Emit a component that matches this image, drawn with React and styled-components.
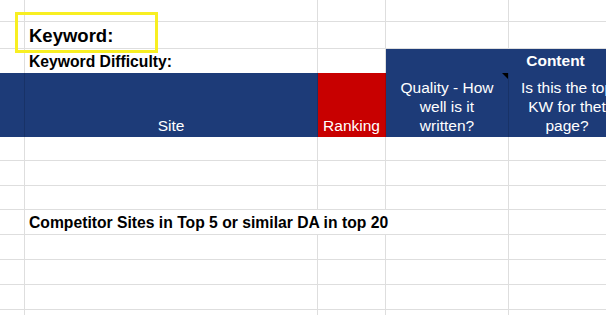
import React from "react";
import styled, { createGlobalStyle } from "styled-components";

const NAVY = "#1d3b78";
const RED = "#c80000";
const LINE = "#dedede";

const GlobalStyle = createGlobalStyle`
  html, body {
    margin: 0;
    padding: 0;
    background: #fff;
    overflow: hidden;
  }
  body {
    font-family: "Liberation Sans", Arial, sans-serif;
  }
`;

const Page = styled.div`
  position: relative;
  width: 606px;
  height: 315px;
  overflow: hidden;
`;

const Grid = styled.div`
  display: grid;
  grid-template-columns: 25px 293px 68px 123px 117px 100px;
  grid-template-rows: 22px 27px 24px 64px 24px 25px 24px 25px 25px 25px 25px 25px;
  width: 726px;
`;

/* plain sheet cell, text sits at the bottom like in Sheets */
const Cell = styled.div`
  box-sizing: border-box;
  display: flex;
  align-items: flex-end;
  min-width: 0;
  padding: 0 4px 1px;
  border-right: 1px solid ${LINE};
  border-bottom: ${({ $flush }) => ($flush ? "none" : `1px solid ${LINE}`)};
  grid-column: ${({ $span }) => ($span ? `span ${$span}` : "auto")};
  color: #000;
  font-size: 15.7px;
  line-height: 18.6px;
  white-space: nowrap;
  ${({ $bold }) => $bold && "font-weight: 700;"}
`;

const KeywordCell = styled(Cell)`
  font-size: 18.5px;
  line-height: 22px;
  font-weight: 700;
  padding-bottom: 1px;
`;

const HeadCell = styled.div`
  position: relative;
  box-sizing: border-box;
  display: flex;
  align-items: flex-end;
  justify-content: center;
  padding: 0 6px 2px;
  background: ${({ $bg }) => $bg || NAVY};
  border-right: 1px solid rgba(0, 0, 0, 0.14);
  color: #fff;
  font-size: 15.5px;
  line-height: 19px;
  text-align: center;
  overflow: hidden;
`;

const GroupHead = styled(HeadCell)`
  grid-column: span 3;
  font-weight: 700;
  line-height: 18.6px;
  padding-bottom: 2px;
`;

const NoteMark = styled.span`
  position: absolute;
  top: 0;
  right: 0;
  width: 0;
  height: 0;
  border-top: 6px solid #000;
  border-left: 6px solid transparent;
`;

const Highlight = styled.div`
  position: absolute;
  left: 15px;
  top: 12px;
  width: 143px;
  height: 41px;
  box-sizing: border-box;
  border: 3.5px solid #f8ef22;
  pointer-events: none;
`;

const COLS = 6;

function BlankRow({ id }) {
  return Array.from({ length: COLS }, (_, i) => <Cell key={`${id}-${i}`} />);
}

export default function App() {
  return (
    <Page>
      <GlobalStyle />
      <Grid>
        <BlankRow id="r1" />

        <Cell />
        <KeywordCell>Keyword:</KeywordCell>
        <Cell />
        <Cell />
        <Cell />
        <Cell />

        <Cell $flush />
        <Cell $flush $bold>
          Keyword Difficulty:
        </Cell>
        <Cell $flush />
        <GroupHead>Content</GroupHead>

        <HeadCell />
        <HeadCell>Site</HeadCell>
        <HeadCell $bg={RED}>Ranking</HeadCell>
        <HeadCell>
          Quality - How well is it written?
          <NoteMark />
        </HeadCell>
        <HeadCell>Is this the top KW for thet page?</HeadCell>
        <HeadCell />

        <BlankRow id="r5" />
        <BlankRow id="r6" />
        <BlankRow id="r7" />

        <Cell />
        <Cell $span={3} $bold>
          Competitor Sites in Top 5 or similar DA in top 20
        </Cell>
        <Cell />
        <Cell />

        <BlankRow id="r9" />
        <BlankRow id="r10" />
        <BlankRow id="r11" />
        <BlankRow id="r12" />
      </Grid>
      <Highlight />
    </Page>
  );
}
